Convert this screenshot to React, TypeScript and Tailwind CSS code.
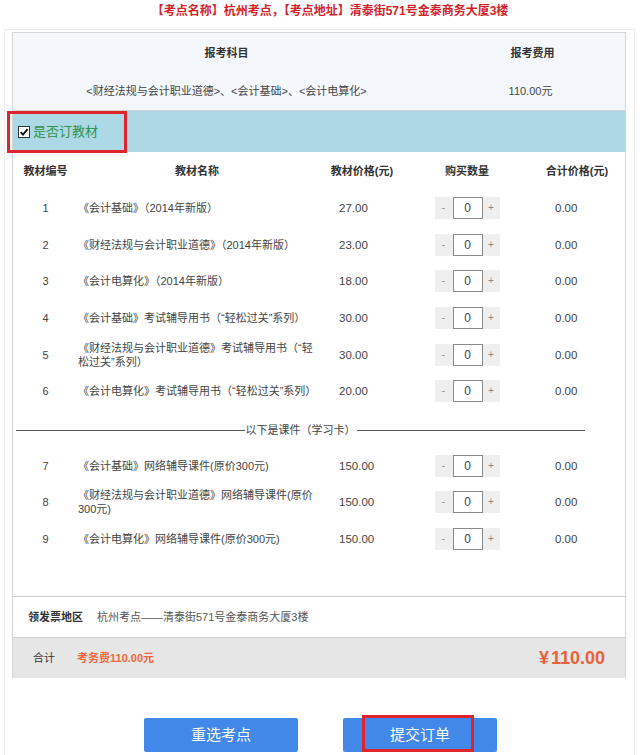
import React from "react";

type Item = { no: number; name: string; price: string };

const BOOKS: Item[] = [
  { no: 1, name: "《会计基础》（2014年新版）", price: "27.00" },
  { no: 2, name: "《财经法规与会计职业道德》（2014年新版）", price: "23.00" },
  { no: 3, name: "《会计电算化》（2014年新版）", price: "18.00" },
  { no: 4, name: "《会计基础》考试辅导用书（“轻松过关”系列）", price: "30.00" },
  { no: 5, name: "《财经法规与会计职业道德》考试辅导用书（“轻松过关”系列）", price: "30.00" },
  { no: 6, name: "《会计电算化》考试辅导用书（“轻松过关”系列）", price: "20.00" },
];

const COURSES: Item[] = [
  { no: 7, name: "《会计基础》网络辅导课件(原价300元)", price: "150.00" },
  { no: 8, name: "《财经法规与会计职业道德》网络辅导课件(原价300元)", price: "150.00" },
  { no: 9, name: "《会计电算化》网络辅导课件(原价300元)", price: "150.00" },
];

function Qty() {
  return (
    <div className="flex h-[22px] w-[65px] items-stretch bg-[#efefef] text-[10px] text-[#888]">
      <span className="flex w-[18px] items-center justify-center">-</span>
      <span className="flex w-[30px] items-center justify-center border border-[#8a8a8a] bg-white text-[12px] text-[#444]">
        0
      </span>
      <span className="flex flex-1 items-center justify-center">+</span>
    </div>
  );
}

function Row({ item }: { item: Item }) {
  return (
    <div className="flex h-[36.6px] items-center text-[11px] leading-[14px] text-[#444]">
      <div className="w-[65px] text-center">{item.no}</div>
      <div className="w-[238px]">{item.name}</div>
      <div className="w-[92px] pl-[23px] text-[11.5px]">{item.price}</div>
      <div className="flex w-[118px] justify-center">
        <Qty />
      </div>
      <div className="flex-1 pl-[29px] text-[11.5px]">0.00</div>
    </div>
  );
}

function CheckBox() {
  return (
    <svg width="12" height="12" viewBox="0 0 12 12" className="shrink-0">
      <rect x="0.5" y="0.5" width="11" height="11" fill="#fff" stroke="#333" />
      <path d="M2.6 6.2 L5 8.6 L9.6 3.2" fill="none" stroke="#111" strokeWidth="1.8" />
    </svg>
  );
}

export default function App() {
  return (
    <div className="h-[755px] w-[640px] overflow-hidden bg-white [font-family:'Liberation_Sans','Noto_Sans_CJK_SC',sans-serif]">
      {/* title */}
      <div className="flex h-[21px] items-center justify-center pl-[20px] text-[12px] font-bold text-[#d1232a]">
        【考点名称】杭州考点，【考点地址】清泰街571号金泰商务大厦3楼
      </div>

      <div className="mt-[8px] ml-[4px] w-[631px] border border-b-0 border-[#ececec] pt-[2px] pb-[40px]">
        <div className="ml-[7px] w-[614px] border border-b-0 border-[#d6d6d6]">
          {/* exam subjects */}
          <div className="border-b border-[#d4d4d4] bg-[#f4f8fc] text-[11px] text-[#444]">
            <div className="flex h-[40px] items-center font-bold text-[#333]">
              <div className="w-[427px] text-center">报考科目</div>
              <div className="flex-1 text-center">报考费用</div>
            </div>
            <div className="flex h-[37px] items-center">
              <div className="w-[427px] text-center">&lt;财经法规与会计职业道德&gt;、&lt;会计基础&gt;、&lt;会计电算化&gt;</div>
              <div className="flex-1 pr-[4px] text-center">110.00元</div>
            </div>
          </div>

          {/* order books toggle */}
          <div className="relative flex h-[41px] items-center gap-[3px] bg-[#add8e6] pl-[5px]">
            <CheckBox />
            <span className="text-[13px] text-[#2f9346]">是否订教材</span>
            <div className="absolute top-0 left-[-6px] h-[42px] w-[120px] border-[3px] border-[#e0242c]" />
          </div>

          {/* table header */}
          <div className="flex h-[38px] items-center text-[11px] font-bold text-[#333]">
            <div className="w-[65px] text-center">教材编号</div>
            <div className="w-[238px] text-center">教材名称</div>
            <div className="w-[92px] text-center">教材价格(元)</div>
            <div className="w-[118px] text-center">购买数量</div>
            <div className="flex-1 pl-[3px] text-center">合计价格(元)</div>
          </div>

          {BOOKS.map((b) => (
            <Row key={b.no} item={b} />
          ))}

          <div className="flex h-[38px] items-center pt-[4px] pl-[3px]">
            <div className="flex w-[569px] items-center text-[11px] text-[#444]">
              <div className="h-px flex-1 bg-[#555]" />
              <span className="px-[1px]">以下是课件（学习卡）</span>
              <div className="h-px flex-1 bg-[#555]" />
            </div>
          </div>

          {COURSES.map((c) => (
            <Row key={c.no} item={c} />
          ))}

          <div className="h-[39px]" />

          {/* invoice */}
          <div className="flex h-[41px] items-center border-t border-[#d0d0d0] pl-[15px] text-[11px]">
            <span className="w-[69px] font-bold text-[#333]">领发票地区</span>
            <span className="text-[#555]">杭州考点——清泰街571号金泰商务大厦3楼</span>
          </div>

          {/* total */}
          <div className="flex h-[41px] items-center border-t border-[#d0d0d0] bg-[#e6e6e6] pr-[20px] pl-[20px] text-[11px]">
            <span className="w-[44px] text-[#333]">合计</span>
            <span className="font-bold text-[#f0673a]">考务费110.00元</span>
            <span className="ml-auto text-[18px] font-bold text-[#e8643a]">
              ¥<span className="ml-[2px]">110.00</span>
            </span>
          </div>
        </div>

        {/* buttons */}
        <div className="flex justify-center gap-[45px] pt-[40px] pl-[2px]">
          <button className="h-[34px] w-[154px] rounded-[2px] bg-[#4288e8] text-[15px] text-white">
            重选考点
          </button>
          <button className="relative h-[34px] w-[154px] rounded-[2px] bg-[#4288e8] text-[15px] text-white">
            提交订单
            <span className="absolute top-[-3px] left-[19px] h-[37px] w-[112px] border-[3px] border-[#e0242c]" />
          </button>
        </div>
      </div>
    </div>
  );
}
